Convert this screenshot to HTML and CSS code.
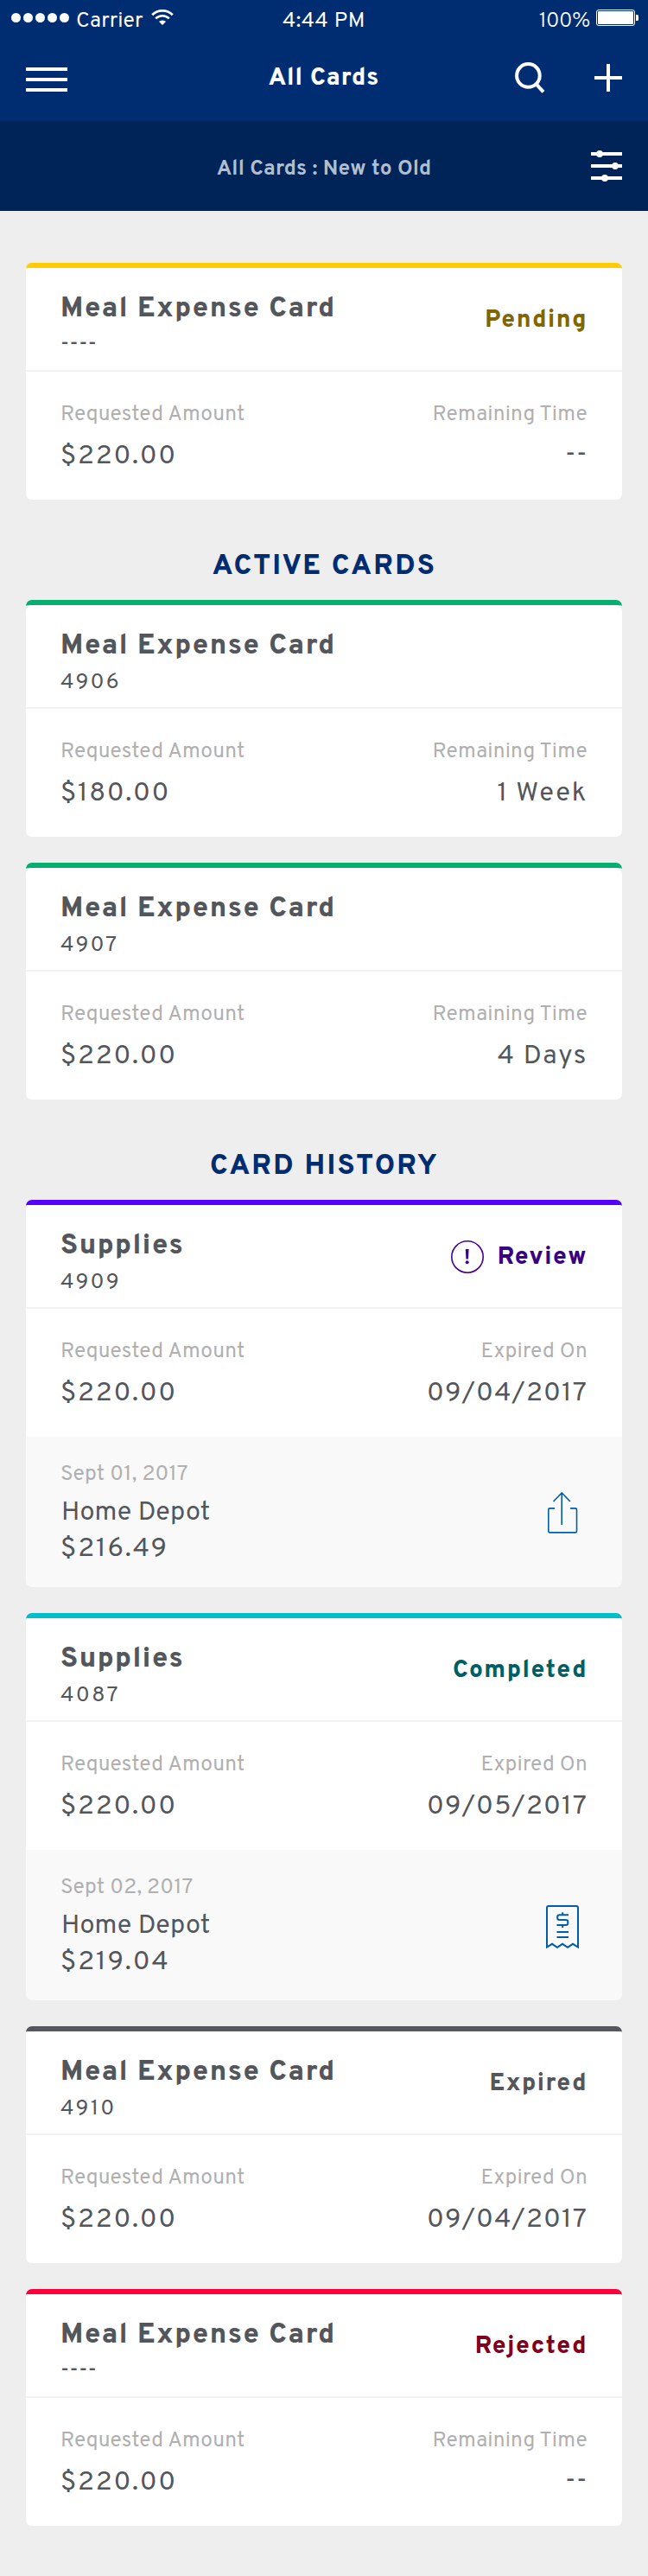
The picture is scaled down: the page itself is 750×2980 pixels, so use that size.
FILE: index.html
```
<!DOCTYPE html>
<html lang="en">
<head>
<meta charset="utf-8">
<title>All Cards</title>
<link rel="stylesheet" href="styles.css">
</head>
<body>
<header class="header">
  <div class="statusbar">
    <div class="statusbar-left">
      <div class="signal"><i class="dot"></i><i class="dot"></i><i class="dot"></i><i class="dot"></i><i class="dot"></i></div>
      <span class="carrier">Carrier</span>
      <svg class="wifi" width="26" height="18" viewBox="0 0 26 18">
        <g fill="none" stroke="#fff" stroke-width="2.7">
          <path d="M1.2 6.2A17 17 0 0 1 24.8 6.2"/>
          <path d="M5.2 10.4A11.2 11.2 0 0 1 20.8 10.4"/>
        </g>
        <path d="M9 14.1a5.7 5.7 0 0 1 8 0l-4 3.9z" fill="#fff"/>
      </svg>
    </div>
    <span class="clock">4:44 PM</span>
    <div class="statusbar-right">
      <span class="percent">100%</span>
      <svg class="battery" width="49" height="19" viewBox="0 0 49 19">
        <rect x="0.5" y="0.5" width="44" height="18" rx="2.5" fill="none" stroke="#fff"/>
        <rect x="2" y="2" width="41" height="15" rx="1" fill="#fff"/>
        <path d="M46 6h1.5q1.5 0 1.5 1.5v4q0 1.5-1.5 1.5H46z" fill="#fff"/>
      </svg>
    </div>
  </div>
  <nav class="navbar">
    <svg width="48" height="32" viewBox="0 0 48 32" fill="#fff"><path d="M0 4h48v4H0zM0 16h48v4H0zM0 28h48v4H0z"/></svg>
    <h1 class="nav-title">All Cards</h1>
    <div class="nav-actions">
      <svg width="35" height="36" viewBox="0 0 35 36" fill="none" stroke="#fff" stroke-width="4"><circle cx="15.4" cy="15.4" r="13.3"/><path d="M24.3 24.8l8.6 9.6"/></svg>
      <svg width="32" height="32" viewBox="0 0 32 32" fill="#fff"><path d="M14 0h4v14h14v4H18v14h-4V18H0v-4h14z"/></svg>
    </div>
  </nav>
  <div class="filterbar">
    <span class="filter-text">All Cards : New to Old</span>
    <svg class="filter-icon" width="36" height="38" viewBox="0 0 36 38" fill="#fff"><path d="M0 3h36v4H0zM0 17h36v4H0zM0 31h36v4H0z"/><circle cx="10" cy="5" r="4"/><circle cx="28" cy="19" r="4"/><circle cx="16" cy="33" r="4"/></svg>
  </div>
</header>

<main class="content">
  <article class="card pending">
    <div class="card-head">
      <div><h3 class="name">Meal Expense Card</h3><p class="number blank">----</p></div>
      <div class="status">Pending</div>
    </div>
    <div class="card-body">
      <div><p class="label">Requested Amount</p><p class="value">$220.00</p></div>
      <div class="end"><p class="label">Remaining Time</p><p class="value blank">--</p></div>
    </div>
  </article>

  <h2 class="section-title">ACTIVE CARDS</h2>
  <article class="card active">
    <div class="card-head">
      <div><h3 class="name">Meal Expense Card</h3><p class="number">4906</p></div>
    </div>
    <div class="card-body">
      <div><p class="label">Requested Amount</p><p class="value">$180.00</p></div>
      <div class="end"><p class="label">Remaining Time</p><p class="value">1 Week</p></div>
    </div>
  </article>
  <article class="card active">
    <div class="card-head">
      <div><h3 class="name">Meal Expense Card</h3><p class="number">4907</p></div>
    </div>
    <div class="card-body">
      <div><p class="label">Requested Amount</p><p class="value">$220.00</p></div>
      <div class="end"><p class="label">Remaining Time</p><p class="value">4 Days</p></div>
    </div>
  </article>

  <h2 class="section-title">CARD HISTORY</h2>
  <article class="card review">
    <div class="card-head">
      <div><h3 class="name">Supplies</h3><p class="number">4909</p></div>
      <div class="status">
        <svg class="alert" width="38" height="38" viewBox="0 0 38 38"><circle cx="19" cy="19" r="18.2" fill="none" stroke="#440099" stroke-width="1.6"/><path d="M16.8 10h3.8l-.6 11.4h-2.6z" fill="#440099"/><circle cx="18.7" cy="25.2" r="2" fill="#440099"/></svg>
        <span>Review</span>
      </div>
    </div>
    <div class="card-body">
      <div><p class="label">Requested Amount</p><p class="value">$220.00</p></div>
      <div class="end"><p class="label">Expired On</p><p class="value date">09/04/2017</p></div>
    </div>
    <div class="purchase">
      <div><p class="label">Sept 01, 2017</p><p class="store">Home Depot</p><p class="total">$216.49</p></div>
      <svg class="purchase-icon" width="38" height="50" viewBox="0 0 38 50" fill="none" stroke="#005da6" stroke-width="1.6"><path d="M10 18.9H4.3q-1.5 0-1.5 1.5v25q0 1.5 1.5 1.5h29.7q1.5 0 1.5-1.5v-25q0-1.5-1.5-1.5H28"/><path d="M18.2 38V1M8.5 11L18.2 1l9.7 10"/></svg>
    </div>
  </article>
  <article class="card completed">
    <div class="card-head">
      <div><h3 class="name">Supplies</h3><p class="number">4087</p></div>
      <div class="status">Completed</div>
    </div>
    <div class="card-body">
      <div><p class="label">Requested Amount</p><p class="value">$220.00</p></div>
      <div class="end"><p class="label">Expired On</p><p class="value date">09/05/2017</p></div>
    </div>
    <div class="purchase">
      <div><p class="label">Sept 02, 2017</p><p class="store">Home Depot</p><p class="total">$219.04</p></div>
      <svg class="purchase-icon" width="38" height="50" viewBox="0 0 38 50" fill="none" stroke="#005da6" stroke-width="2"><path d="M1 48.5V3q0-2 2-2h32q2 0 2 2v45.500l-6-3.700-6 4-6-4-6 4-6-4z"/><path d="M26 11.300H15.500q-2.300 0-2.300 2.300v1.200q0 2.300 2.300 2.300h7.500q2.300 0 2.300 2.300v1.300q0 2.300-2.300 2.300H12.500M19.200 8.300v3M19.200 23v3M12.500 31H26M12.500 37H26"/></svg>
    </div>
  </article>
  <article class="card expired">
    <div class="card-head">
      <div><h3 class="name">Meal Expense Card</h3><p class="number">4910</p></div>
      <div class="status">Expired</div>
    </div>
    <div class="card-body">
      <div><p class="label">Requested Amount</p><p class="value">$220.00</p></div>
      <div class="end"><p class="label">Expired On</p><p class="value date">09/04/2017</p></div>
    </div>
  </article>
  <article class="card rejected">
    <div class="card-head">
      <div><h3 class="name">Meal Expense Card</h3><p class="number blank">----</p></div>
      <div class="status">Rejected</div>
    </div>
    <div class="card-body">
      <div><p class="label">Requested Amount</p><p class="value">$220.00</p></div>
      <div class="end"><p class="label">Remaining Time</p><p class="value blank">--</p></div>
    </div>
  </article>
</main>
</body>
</html>
```
FILE: styles.css
```
* { box-sizing: border-box; }
body {
  margin: 0;
  background: #eee;
  color: #53565a;
  font-family: Overpass, Roboto, "Liberation Sans", sans-serif;
}
h1, h2, h3, p { margin: 0; }
svg { display: block; flex: none; }

.header { color: #fff; background: #002d72; }

.statusbar {
  height: 40px;
  padding: 11px 11px 0 13px;
  display: grid;
  grid-template-columns: 1fr auto 1fr;
  font-size: 24.5px;
  line-height: 28px;
}
.statusbar-left, .statusbar-right { display: flex; align-items: flex-start; }
.statusbar-right { justify-content: flex-end; }
.signal { display: flex; gap: 3px; padding-top: 4px; margin-right: 8px; }
.dot { width: 11px; height: 11px; border-radius: 50%; background: #fff; }
.carrier { letter-spacing: 0.1px; }
.wifi { margin-left: 9px; }
.clock { padding-right: 2px; letter-spacing: 0.6px; }
.percent { font-weight: 300; letter-spacing: -0.4px; }
.battery { margin-left: 7px; }

.navbar {
  height: 100px;
  padding: 0 30px;
  display: grid;
  grid-template-columns: 1fr auto 1fr;
  align-items: center;
}
.nav-title {
  padding-top: 2px;
  font-size: 28px;
  line-height: 36px;
  font-weight: 800;
  letter-spacing: 1px;
}
.nav-actions { display: flex; justify-content: flex-end; align-items: center; gap: 57px; }

.filterbar {
  height: 104px;
  padding: 0 30px;
  display: grid;
  grid-template-columns: 1fr auto 1fr;
  align-items: center;
  background: #002358;
}
.filter-text {
  grid-column: 2;
  padding-top: 8px;
  color: #b2bdcd;
  font-size: 24.5px;
  line-height: 28px;
  font-weight: 700;
  letter-spacing: 0.15px;
}
.filter-icon { justify-self: end; }

.content { padding: 60px 30px 58px; }

.section-title {
  margin: 58px 0 18px;
  padding-left: 1px;
  color: #002d72;
  font-size: 32.5px;
  line-height: 40px;
  font-weight: 800;
  letter-spacing: 2.3px;
  text-align: center;
}

.card { border-radius: 7px; overflow: hidden; border-top: 6px solid; border-color: var(--accent); }
.card + .card { margin-top: 30px; }
.card-head {
  height: 120px;
  padding: 28px 40px 0;
  display: flex;
  justify-content: space-between;
  align-items: flex-start;
  background: #fff;
  border-bottom: 2px solid #f3f3f3;
}
.name { font-size: 32.5px; line-height: 40px; font-weight: 800; letter-spacing: 1.6px; }
.number { margin-top: 8px; font-size: 25px; line-height: 28px; letter-spacing: 2.3px; }
.number.blank { line-height: 24px; font-weight: 500; letter-spacing: 0.5px; }
.status {
  margin: 15px 0 0;
  display: flex;
  align-items: center;
  gap: 16px;
  height: 36px;
  color: var(--ink);
  font-size: 28px;
  line-height: 36px;
  font-weight: 800;
  letter-spacing: 1.55px;
}
.alert { margin-bottom: 2px; }

.card-body {
  height: 148px;
  padding: 36px 40px 0;
  display: flex;
  justify-content: space-between;
  background: #fff;
}
.end { text-align: right; }
.label { color: #b0b0b0; font-size: 24.5px; line-height: 28px; letter-spacing: 0.2px; }
.value { margin-top: 17px; font-size: 31px; line-height: 36px; font-weight: 450; letter-spacing: 1.75px; }
.value.blank { line-height: 32px; letter-spacing: 0.6px; }
.date { letter-spacing: 1.15px; }

.purchase {
  height: 174px;
  padding: 30px 50px 0 40px;
  display: flex;
  justify-content: space-between;
  background: #f9f9f9;
}
.store { margin-top: 13px; padding-left: 1px; font-size: 30.5px; line-height: 36px; font-weight: 450; letter-spacing: 0.1px; }
.total { margin-top: 6px; font-size: 31px; line-height: 36px; font-weight: 450; letter-spacing: 1.9px; }
.purchase-icon { margin-top: 34px; }

.pending { --accent: #ffcd00; --ink: #806600; }
.active { --accent: #04af70; }
.active .card-head { border-radius: 7px 7px 0 0; }
.review { --accent: #5500ff; --ink: #380082; }
.completed { --accent: #00bfcb; --ink: #005f65; }
.expired { --accent: #53565a; --ink: #53565a; }
.rejected { --accent: #ff003c; --ink: #80001e; }
```
